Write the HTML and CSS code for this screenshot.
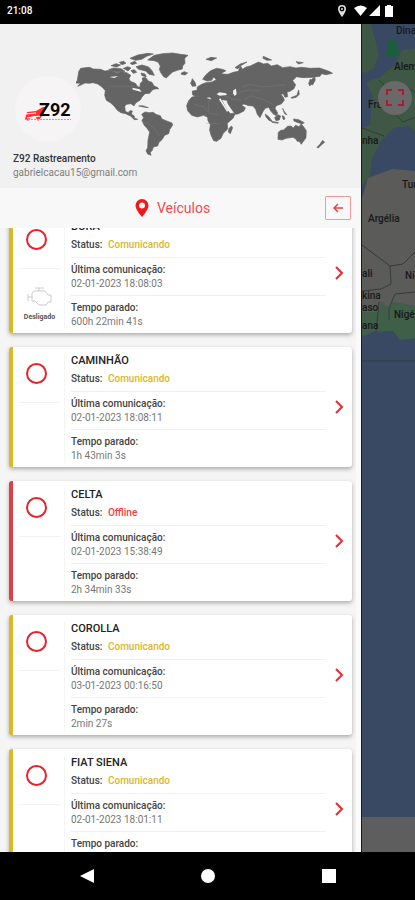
FILE: index.html
```html
<!DOCTYPE html>
<html lang="pt-BR">
<head>
<meta charset="utf-8">
<meta name="viewport" content="width=device-width, initial-scale=1">
<title>Z92 Rastreamento</title>
<link rel="stylesheet" href="styles.css">
</head>
<body>
<div class="statusbar">
  <span>21:08</span>
  <svg class="status-icons" viewBox="0 0 56 14" width="56" height="14" aria-hidden="true">
    <path fill="#ddd" fill-rule="evenodd" d="M5 1a4 4 0 0 0-4 4c0 3 4 8 4 8s4-5 4-8a4 4 0 0 0-4-4zm0 1.600a2.400 2.400 0 1 1 0 4.800 2.400 2.400 0 0 1 0-4.800z"/>
    <circle cx="5" cy="5" r="1" fill="#ddd"/>
    <path fill="#fff" d="M17 4q7-5 13 0l-6.500 8zM43 1v11H32zM48 2h2V1h4v1h2v11h-8z"/>
  </svg>
</div>
<main class="app">
  <section class="drawer">
    <header class="profile">
      <svg class="world" viewBox="0 0 780 345" aria-hidden="true">
        <g fill="#646464" stroke="#646464" stroke-width="2" stroke-linejoin="round">
          <path d="M8 80l6-10 26-3 12 5 22 1 12 5 16-2 20 7 16-3 14 3 12 8-5 10 4 8 15 6 8 11 7-1-1-9 8-8-1-9 9-2 10 12 10 3 6 11 8 7-13 5-8 10-14 1-9 10-5 9-14 9-5 9-9-7-13 2-6 6 2 15 8 4 6-6 7 1-3 10 8 4 2 8 9 3-10 1-10-10-16-8-14-3-11-7-10-13-10-9-13-8-5-15 2-14-10-11-13-9-14-4-11 2-13-1-14 7-8 3 8-9-14-1 5-8z"/>
          <path d="M197 208l10-7 14 2 10-1 11 7 11 3 5 10 12 5 18 7 2 6-9 14-3 12-12 5-8 13-9 8-4 11-13 3-3 10-6 6 2 9-10-4-5-10 5-9 1-22 5-25-8-11-9-10-6-14 5-8z"/>
          <path d="M215 45l20-14 25-5 30-2 24 4 22 3-10 9 1 15-7 8-1 9-15 4-14 5-10 9-9 9-8-4-8-11-5-11 3-9-6-12-12-5z"/>
          <path d="M162 40l24-10 30-5 16 2-20 7-15 9-19 3zM180 65l18-5 20 6 10 11 7 14-16-3-10-10-21-5zM130 52l13-3 7 6-12 4zM105 62l15-6 14 4-12 6zM98 74l15-5 22 2 12 8-25 2zM142 70l13-5 10 4-9 9zM163 54l14-5 5 6-14 4zM165 77l10-3 7 8-10 3zM195 84l12 3 4 8-13-3zM316 84l9-4 10 4-8 6-11-2zM188 183l12-1 17 6-10-1zM230 122l14 5 4 5-12-1zM345 115l4-14 8 11 3 11-11 1zM344 113l5-1-2 7z"/>
          <path d="M332 182l6-15 10-11 24-4 14 1 3 7 18 4 7-4 22 4 8 14 8 15 11 13 15-2-6 15-18 16 1 17-13 13-7 15-13 9-9-2-8-17-4-14 2-17-7-12-1-10-12-6-19 5-17-5-12-14zM466 243l4 5-7 18-6-5 2-10z"/>
          <path d="M380 103l10-14 14-12 18-7 17 3 11 4-12 7-5 18-12 2-8-8-6 10-13 2z"/>
          <path d="M350 150l-1-12 14-2 1-10 13-8 13-5 18-2 13-7 5-10 13-7 17 1 16-6 15-3 6-16 7 10 10-7 13-3 12-6 13-6 15 6 12-2 11 8 18-4 16 9 22-3 18 4 16-2 27 3 28-1 28 10 11 6-20 4-13-3-5 8-16 2 2 9-8 15-7-3 2-11 9-9-33 1-19-3-12 12 9 12-5 12-12 8-9 2 2 14-8 2-5-11-7 2 7 9 3 9-9 11-15 5-4 8 8 14-3 8-9-4-8-9-7-12-10 3-6 8-10 20-8-10-5-15-8-10-13-1-14-5-7 4 11 7-4 10-18 9-8 1-13-18-9-14-3-10-15-2-13 2-7-6-8 7-8-11-8 1-5 9z"/>
          <path d="M607 262l8-6 8-1 12-11 10-1 7 6 7-8 10 4 7-8 8 10 7 10-1 22-10 13-16-3-5-8-9-4-19 3-13 5-12-2zM672 292l8 0-4 6zM723 307l9-9 8-12 6 6-10 8-9 9zM568 207l11 9 9 12-8-1-10-11zM596 218l10-9 8 4-4 12-10 2zM586 229l22 4-3 2-17-3zM619 212l3 12 5-2-3-8zM653 222l15 2 17 9-7 4-15-5-9-4zM620 190l4 8 9 12-7-4zM645 158l18-7 5-16 2 13-9 9-14 3zM703 102l6 8-7 13-4-7zM390 43l15-6 17 2-16 8zM477 68l16-11 20-6-20 12-7 8zM562 34l25 11-14 1-12-6zM660 50l22 3-14 4z"/>
        </g>
        <g fill="#f1f1f1">
          <path d="M422 148l8-6 20 3 3 5-22 2zM472 136l8-5 2 17-6 5-5-8zM168 128l23 5 6 8-26-7zM165 96l16-2 12 8-3 13-14-3-10-9zM433 160l24 38-4 2-24-37zM100 96l27-3-12 6z"/>
        </g>
        <g fill="none" stroke="#858585" stroke-width="1">
          <path d="M100 124h78M195 228l26 12 16 13 12 20M355 178l30 8 10 14M398 165v40l28 4M390 235l39 1M499 126l25-8 35 8 35-3 35-4M485 143l35-8 35 3M504 166l20-14 34 10 35 16M448 153l25 10 24 3"/>
        </g>
      </svg>
      <div class="avatar">
        <svg viewBox="0 0 66 66" width="66" height="66" role="img" aria-label="Z92">
          <path d="M10 43l2-7 9-1 7-4h4l-4 8-5 6-3-5-4 1-3 4z" fill="#f33"/>
          <path d="M10 38l11-1M12 42l13-2" stroke="#fff" stroke-width="1"/>
          <text x="24" y="40" class="logo-text">Z92</text>
          <path d="M10 43.500h46" stroke="#aaa" stroke-dasharray="2 1"/>
        </svg>
      </div>
      <h1>Z92 Rastreamento</h1>
      <p>gabrielcacau15@gmail.com</p>
    </header>
    <div class="toolbar">
      <h2>
        <svg viewBox="0 0 14 18" width="14" height="18" aria-hidden="true"><path fill="#f01818" fill-rule="evenodd" d="M7 0a6.500 6.500 0 0 0-6.500 6.500C.5 11 7 18 7 18s6.500-7 6.500-11.500A6.500 6.500 0 0 0 7 0zm0 3.500a3 3 0 1 1 0 6 3 3 0 0 1 0-6z"/></svg>
        Veículos
      </h2>
      <button class="back" aria-label="Voltar"><svg viewBox="0 0 10 10" width="10" height="10"><path d="M10 5H1M5 1L1 5l4 4" fill="none" stroke="#f04040" stroke-width="1.500"/></svg></button>
    </div>
    <div class="list">
      <article class="card">
        <div class="side"><span class="ring"></span><div class="engine">
          <svg viewBox="0 0 26 20" width="26" height="20" fill="none" stroke="#ccc" aria-hidden="true"><path d="M8 2h9M12 2v3M7 5h11l3 4h3v7h-3l-2 3h-7l-4-4H5V7zM1 8v7M1 11h4"/></svg>
          <span>Desligado</span></div></div>
        <div class="info"><div class="row"><h3>BORA</h3><p><b>Status:</b> <span class="on">Comunicando</span></p></div><div class="row"><b>Última comunicação:</b><p>02-01-2023 18:08:03</p></div><div class="row"><b>Tempo parado:</b><p>600h 22min 41s</p></div></div>
        <button class="open" aria-label="Abrir BORA"><svg viewBox="0 0 9 14" width="9" height="14"><path d="M1 1l6 6-6 6"/></svg></button>
      </article>
      <article class="card">
        <div class="side"><span class="ring"></span></div>
        <div class="info"><div class="row"><h3>CAMINHÃO</h3><p><b>Status:</b> <span class="on">Comunicando</span></p></div><div class="row"><b>Última comunicação:</b><p>02-01-2023 18:08:11</p></div><div class="row"><b>Tempo parado:</b><p>1h 43min 3s</p></div></div>
        <button class="open" aria-label="Abrir CAMINHÃO"><svg viewBox="0 0 9 14" width="9" height="14"><path d="M1 1l6 6-6 6"/></svg></button>
      </article>
      <article class="card offline">
        <div class="side"><span class="ring"></span></div>
        <div class="info"><div class="row"><h3>CELTA</h3><p><b>Status:</b> <span class="off">Offline</span></p></div><div class="row"><b>Última comunicação:</b><p>02-01-2023 15:38:49</p></div><div class="row"><b>Tempo parado:</b><p>2h 34min 33s</p></div></div>
        <button class="open" aria-label="Abrir CELTA"><svg viewBox="0 0 9 14" width="9" height="14"><path d="M1 1l6 6-6 6"/></svg></button>
      </article>
      <article class="card">
        <div class="side"><span class="ring"></span></div>
        <div class="info"><div class="row"><h3>COROLLA</h3><p><b>Status:</b> <span class="on">Comunicando</span></p></div><div class="row"><b>Última comunicação:</b><p>03-01-2023 00:16:50</p></div><div class="row"><b>Tempo parado:</b><p>2min 27s</p></div></div>
        <button class="open" aria-label="Abrir COROLLA"><svg viewBox="0 0 9 14" width="9" height="14"><path d="M1 1l6 6-6 6"/></svg></button>
      </article>
      <article class="card">
        <div class="side"><span class="ring"></span></div>
        <div class="info"><div class="row"><h3>FIAT SIENA</h3><p><b>Status:</b> <span class="on">Comunicando</span></p></div><div class="row"><b>Última comunicação:</b><p>02-01-2023 18:01:11</p></div><div class="row"><b>Tempo parado:</b></div></div>
        <button class="open" aria-label="Abrir FIAT SIENA"><svg viewBox="0 0 9 14" width="9" height="14"><path d="M1 1l6 6-6 6"/></svg></button>
      </article>
    </div>
  </section>
  <aside class="map">
    <svg viewBox="361 24 54 828" preserveAspectRatio="xMinYMin slice" aria-hidden="true">
      <path fill="#394863" d="M361 24h54v828h-54z"/>
      <path fill="#3f5745" d="M361 24h9l8 30-5 14-8 5-4-1zM415 48l-14 2-8 16-6 4-8 7-14 5 6 13-2 30-8 3v58l8-10 2-18 10-18 12-12 14-2 10 8z"/>
      <path fill="#5b5b59" d="M361 198l6-20 24-9 24 2v159l-20-14-10-3-24 8z"/>
      <path fill="#3f5f48" d="M361 312l16 0 3-10 8 6 4-6 23 4v32l-16 2-7-9-20 1-11 5z"/>
      <path fill="none" stroke="#353d3a" d="M378 80l10 10 14-5 13 8M392 112l10 10 13-5M361 128l22 8M361 245l28 21 1 18-10 5-19 2M389 266l13-2 13-13M388 320v-12l6-14 21-2M378 302l-3 30M361 361h54"/>
      <path fill="#5e5e5e" d="M361 817h54v35h-54z"/>
      <g class="places"><text x="395" y="34">Dinamarca</text><text x="393" y="70">Alemanha</text><text x="367" y="108">França</text><text x="361" y="144">nha</text><text x="401" y="188">Tunísia</text><text x="367" y="222">Argélia</text><text x="361" y="277">ali</text><text x="404" y="279">Níger</text><text x="361" y="299">kina</text><text x="361" y="311">aso</text><text x="393" y="318">Nigéria</text><text x="361" y="329">ana</text><text x="414" y="369">I</text></g>
      <path fill="#17603a" d="M384 55l2-4v-5q0-4 4-6v-2h2v2q5 2 5 6v5l2 4zM389 56h4l-2 2z"/>
      <circle cx="394" cy="98" r="17" fill="#696969"/>
      <path fill="none" stroke="#a31f36" stroke-width="2" d="M386 95v-5h5M397 90h5v5M402 100v5h-5M391 105h-5v-5"/>
    </svg>
  </aside>
</main>
<nav class="navbar" aria-label="Sistema">
  <button aria-label="Voltar"><svg viewBox="0 0 14 14" width="14" height="14"><path d="M14 0v14L0 7z"/></svg></button>
  <button aria-label="Início"><svg viewBox="0 0 14 14" width="14" height="14"><circle cx="7" cy="7" r="7"/></svg></button>
  <button aria-label="Recentes"><svg viewBox="0 0 14 14" width="14" height="14"><path d="M0 0h14v14H0z"/></svg></button>
</nav>
</body>
</html>
```
FILE: styles.css
```css
* { box-sizing: border-box; margin: 0; padding: 0; }
body {
  height: 100vh;
  display: flex;
  flex-direction: column;
  overflow: hidden;
  background: #000;
  color: #777;
  font: 10px/14px Roboto, sans-serif;
}
button { border: 0; background: none; display: grid; place-items: center; }
svg { display: block; }

.statusbar {
  height: 24px;
  padding: 0 22px 2px 7px;
  display: flex;
  align-items: center;
  justify-content: space-between;
  flex: none;
  color: #fff;
  font-weight: 500;
}
.app { flex: 1; min-height: 0; display: flex; }
.drawer {
  width: 87%;
  display: flex;
  flex-direction: column;
  background: #f6f5f6;
  border-right: 5px solid #fafafa;
}
.map { flex: 1; overflow: hidden; border-left: 1px solid #13154a; background: #394863; }
.map svg { width: 100%; height: 100%; }
.places { fill: #171919; font-size: 10px; font-weight: 500; }

.profile {
  position: relative;
  height: 164px;
  margin-right: -5px;
  padding: 52px 13px 0;
  flex: none;
  background: #f1f1f1;
}
.world { position: absolute; left: 21%; top: 21px; width: 72%; }
.avatar {
  position: relative;
  width: 66px;
  height: 66px;
  margin: 0 0 10px 2px;
  border-radius: 50%;
  background: #f7f4f5;
}
.logo-text { fill: #080808; font: 700 18px Roboto, sans-serif; }
.profile h1 { color: #333; font-size: 10px; font-weight: 500; line-height: 14px; }
.profile p { color: #808080; font-size: 10px; line-height: 14px; }

.toolbar {
  height: 40px;
  margin-right: -5px;
  padding: 0 10px;
  flex: none;
  display: grid;
  grid-template-columns: 10px 1fr 26px;
  align-items: center;
  background: #f8f8f8;
}
.toolbar h2 {
  grid-column: 2;
  display: flex;
  align-items: center;
  justify-content: center;
  gap: 8px;
  color: #f04a4e;
  font-size: 14px;
  font-weight: 400;
}
.back { width: 26px; height: 24px; border: 1px solid #f6999d; border-radius: 1px; }

.list { flex: 1; min-height: 0; overflow: hidden; padding: 0 4px 0 9px; }
.card {
  height: 120px;
  margin-bottom: 14px;
  display: flex;
  border-left: 4px solid #dbb920;
  border-radius: 3px;
  background: #fff;
  box-shadow: 0 2px 4px #aaa;
}
.card:first-child { margin-top: -15px; }
.card.offline { border-color: #df4046; }
.side {
  width: 52px;
  margin: 7px 0 4px;
  padding: 0 4px 0 6px;
  border-right: 1px solid #f5f5f5;
  text-align: center;
}
.ring {
  display: block;
  width: 21px;
  height: 21px;
  margin: 9px 7px 18px;
  border: 2px solid #eb2028;
  border-radius: 50%;
}
.side::before { content: ""; display: table; }
.ring + .engine { border-top: 1px solid #f2f2f2; }
.side::after { content: ""; display: block; border-top: 1px solid #f2f2f2; }
.side:has(.engine)::after { display: none; }
.engine { padding-top: 17px; color: #555; font-size: 7px; font-weight: 700; }
.engine svg { margin: 0 auto; }
.engine span { display: block; margin-top: 4px; }
.info { flex: 1; padding: 7px 0 0 6px; }
.row { border-bottom: 1px solid #f0f0f0; height: 38px; padding-top: 5px; }
.row:first-child { padding: 0; }
.row:last-child { border: 0; }
.row h3 { color: #222; font-size: 11px; font-weight: 500; line-height: 14px; }
.row h3 + p { padding-top: 4px; }
.row b { color: #444; font-weight: 500; display: inline-block; }
.on { color: #dcb62c; margin-left: 3px; font-weight: 500; }
.off { color: #ed4146; margin-left: 3px; font-weight: 500; }
.open { width: 26px; }
.open path { fill: none; stroke: #ee2931; stroke-width: 2; }

.navbar { height: 48px; flex: none; padding: 0 26px; display: grid; grid-template-columns: repeat(3, 1fr); }
.navbar svg { fill: #fff; }
```
